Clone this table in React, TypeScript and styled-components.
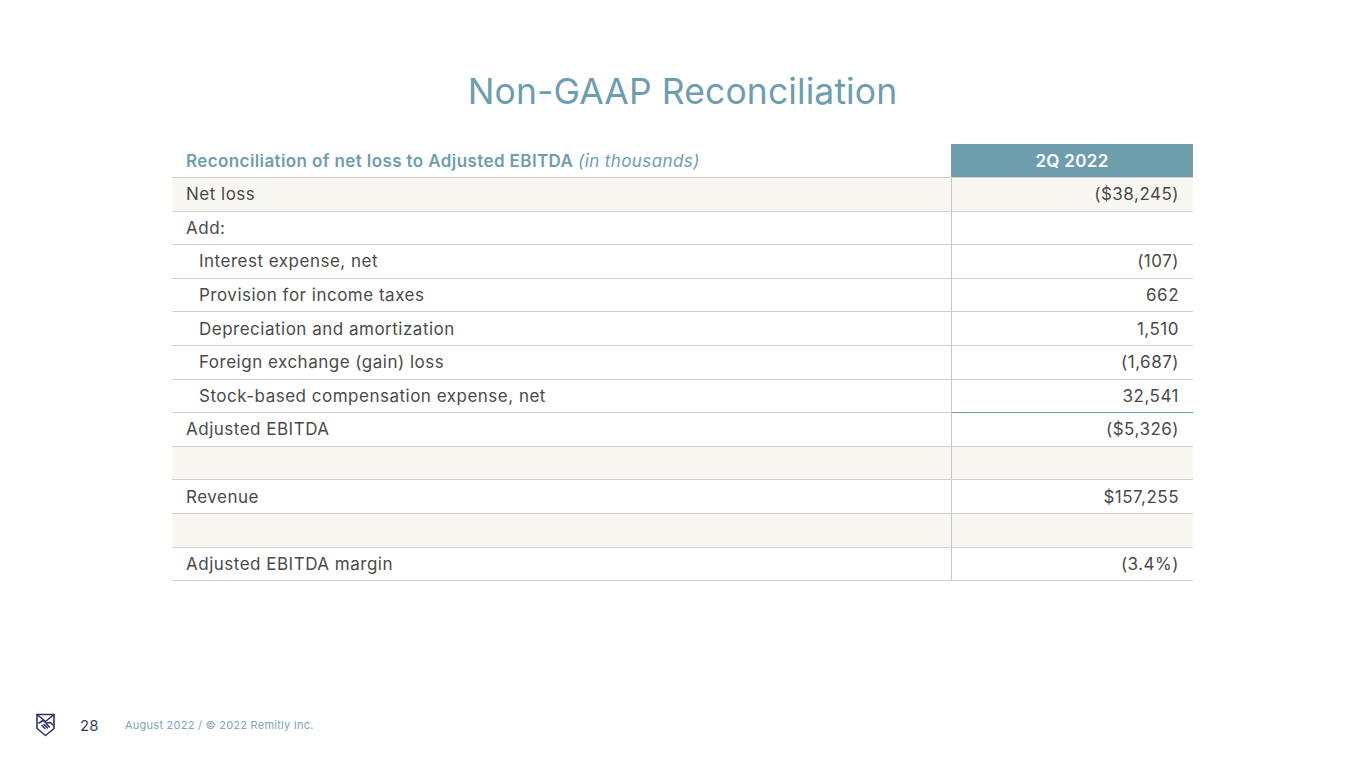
import React from "react";
import styled, { createGlobalStyle } from "styled-components";

const Global = createGlobalStyle`
  html, body { margin: 0; padding: 0; background: #ffffff; }
  body { font-family: "Inter", "Noto Sans", sans-serif; }
`;

const Slide = styled.div`
  width: 1365px;
  height: 768px;
  position: relative;
  display: flex;
  flex-direction: column;
  align-items: center;
  box-sizing: border-box;
  padding-top: 68px;
`;

const Title = styled.h1`
  margin: 0;
  font-family: "Inter", sans-serif;
  font-weight: 400;
  font-size: 35.5px;
  line-height: 48px;
  color: #6e9eae;
  letter-spacing: 0.1px;
`;

const Table = styled.table`
  margin-top: 28px;
  width: 1021px;
  border-collapse: collapse;
  font-size: 17px;
  letter-spacing: 0.5px;
  color: #4a4a4a;
`;

const HeadLabel = styled.th`
  text-align: left;
  font-weight: 600;
  color: #6e9eae;
  height: 33px;
  padding: 0 0 0 14px;
  border-bottom: 1.5px solid #cfcfcf;
  font-size: 17px;
  letter-spacing: 0.4px;
`;

const Italic = styled.span`
  font-style: italic;
  font-weight: 400;
`;

const HeadValue = styled.th`
  width: 240px;
  background: #6e9eae;
  color: #ffffff;
  font-weight: 600;
  font-size: 17px;
  letter-spacing: 0.3px;
  text-align: center;
  border-bottom: 1.5px solid #cfcfcf;
`;

const Row = styled.tr<{ $shade?: boolean }>`
  height: 33.6px;
  background: ${(p) => (p.$shade ? "#f9f7f1" : "transparent")};
`;

const Label = styled.td<{ $indent?: boolean }>`
  height: 32.6px;
  padding: 0 0 0 ${(p) => (p.$indent ? "27px" : "14px")};
  border-bottom: 1.5px solid #cfcfcf;
`;

const Value = styled.td<{ $accent?: boolean }>`
  text-align: right;
  padding: 0 14px 0 0;
  border-left: 1.5px solid #c6c6c6;
  border-bottom: 1.5px solid ${(p) => (p.$accent ? "#6e9eae" : "#cfcfcf")};
`;

const Footer = styled.footer`
  position: absolute;
  left: 36px;
  bottom: 31px;
  display: flex;
  align-items: center;
`;

const PageNum = styled.span`
  margin-left: 25px;
  font-size: 15px;
  color: #3a3f5c;
  width: 45px;
`;

const Copy = styled.span`
  font-size: 11px;
  letter-spacing: 0.25px;
  color: #80a5b3;
`;

const Logo = () => (
  <svg width="19" height="24" viewBox="0 0 19 24" fill="none" stroke="#2e3467" strokeWidth="1.6" strokeLinejoin="round" strokeLinecap="round">
    <path d="M1 1.5 H18 V15.5 L9.5 22.5 L1 15.5 Z" />
    <path d="M1 1.5 L9.5 8.5 L18 1.5" />
    <path d="M3 10 L7 7.5 L10 10 L14.5 9.5 L17 12" />
    <path d="M6 12.5 L9 15.5 M8 11.5 L11.5 14.8 M10.5 11 L13.5 14" />
  </svg>
);

type R = { label: string; value: string; indent?: boolean; shade?: boolean; accent?: boolean };

const rows: R[] = [
  { label: "Net loss", value: "($38,245)", shade: true },
  { label: "Add:", value: "" },
  { label: "Interest expense, net", value: "(107)", indent: true },
  { label: "Provision for income taxes", value: "662", indent: true },
  { label: "Depreciation and amortization", value: "1,510", indent: true },
  { label: "Foreign exchange (gain) loss", value: "(1,687)", indent: true },
  { label: "Stock-based compensation expense, net", value: "32,541", indent: true, accent: true },
  { label: "Adjusted EBITDA", value: "($5,326)" },
  { label: "", value: "", shade: true },
  { label: "Revenue", value: "$157,255" },
  { label: "", value: "", shade: true },
  { label: "Adjusted EBITDA margin", value: "(3.4%)" },
];

export default function App() {
  return (
    <>
      <Global />
      <Slide>
        <Title>Non-GAAP Reconciliation</Title>
        <Table>
          <thead>
            <tr>
              <HeadLabel>
                Reconciliation of net loss to Adjusted EBITDA <Italic>(in thousands)</Italic>
              </HeadLabel>
              <HeadValue>2Q 2022</HeadValue>
            </tr>
          </thead>
          <tbody>
            {rows.map((r, i) => (
              <Row key={i} $shade={r.shade}>
                <Label $indent={r.indent}>{r.label}</Label>
                <Value $accent={r.accent}>{r.value}</Value>
              </Row>
            ))}
          </tbody>
        </Table>
        <Footer>
          <Logo />
          <PageNum>28</PageNum>
          <Copy>August 2022 / © 2022 Remitly Inc.</Copy>
        </Footer>
      </Slide>
    </>
  );
}
